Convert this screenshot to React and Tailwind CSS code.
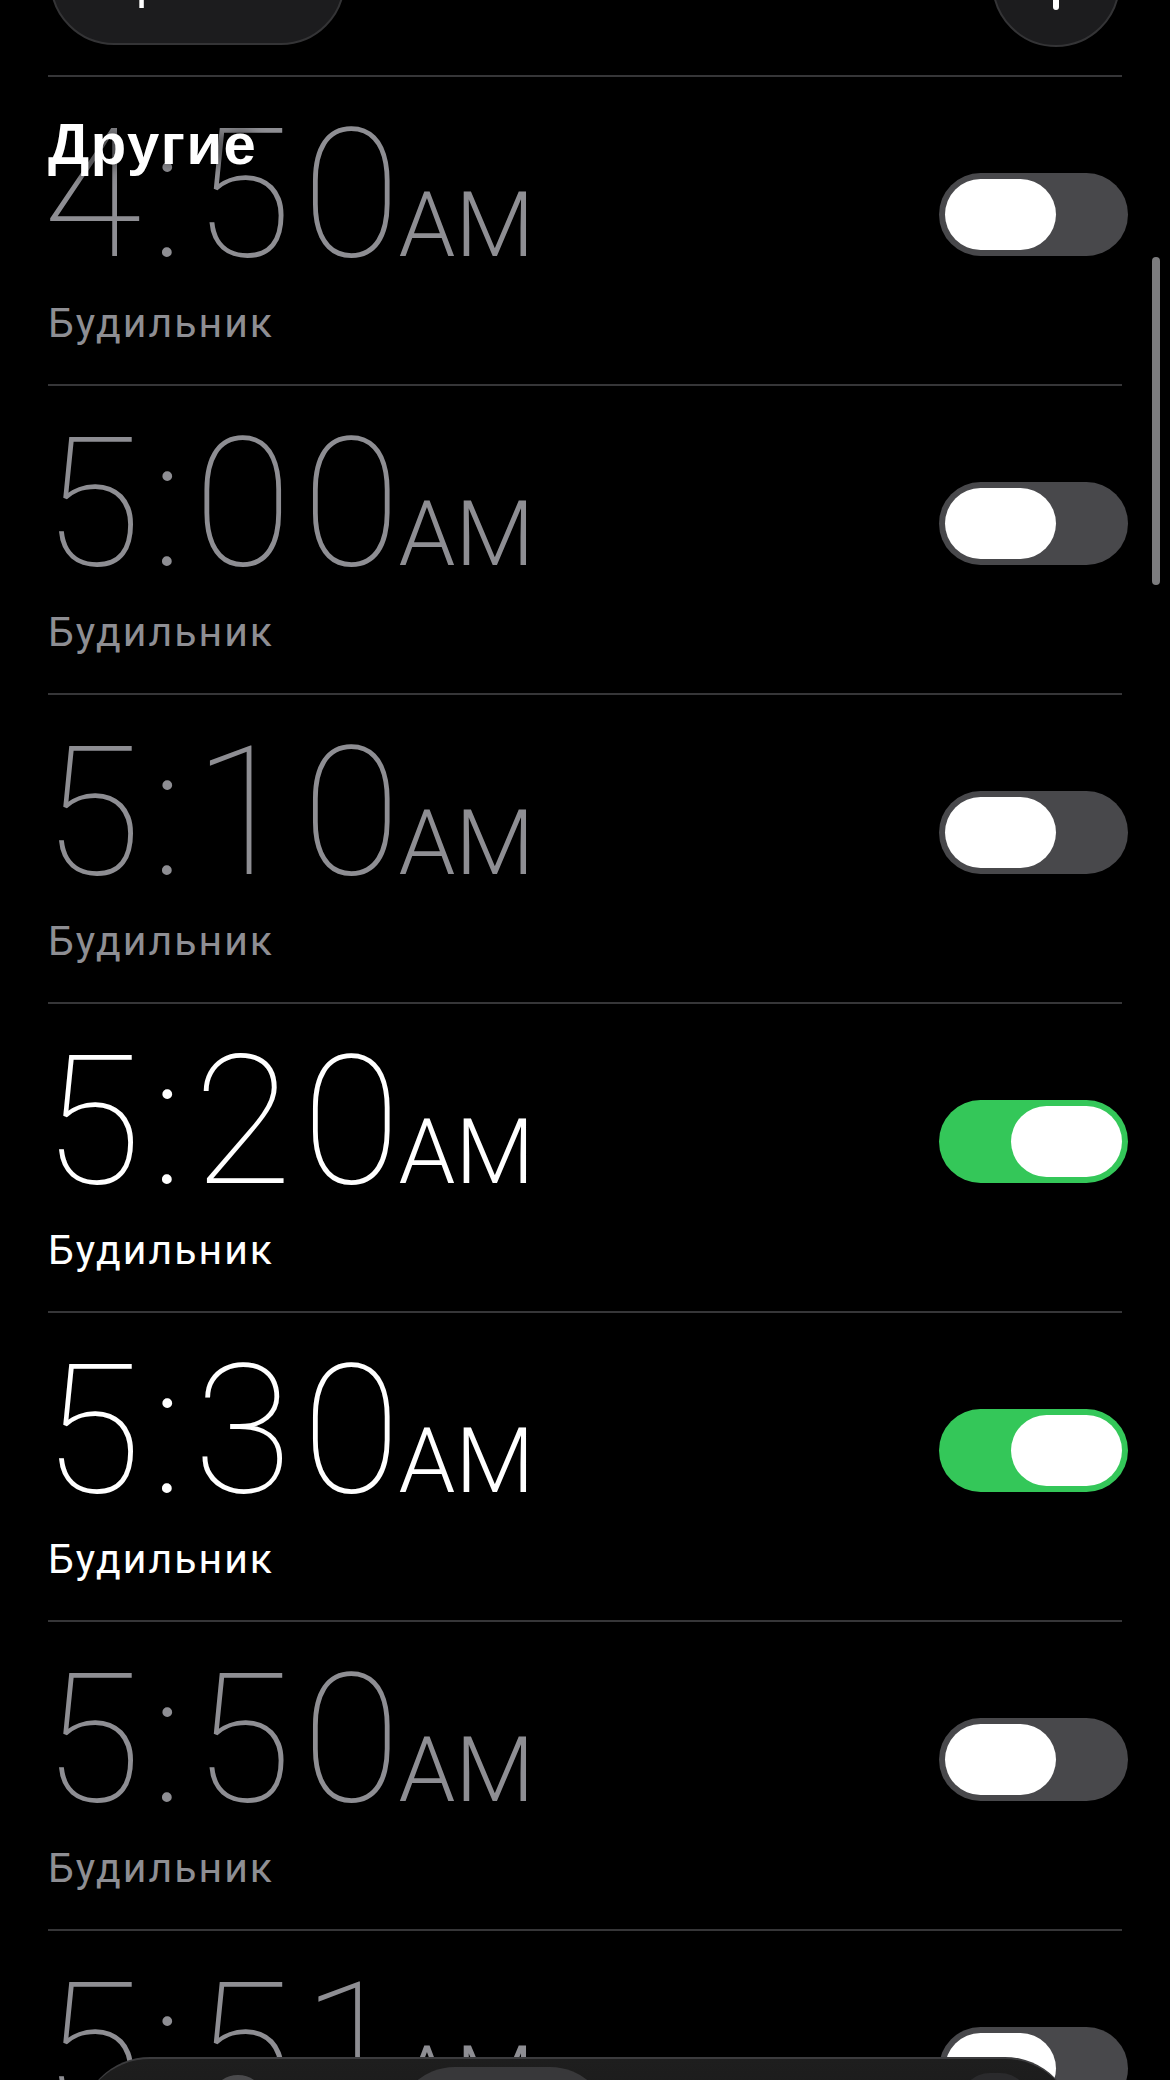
import React from "react";

const alarms = [
  { time: "4:50", on: false },
  { time: "5:00", on: false },
  { time: "5:10", on: false },
  { time: "5:20", on: true },
  { time: "5:30", on: true },
  { time: "5:50", on: false },
  { time: "5:51", on: false },
];

/* ─── TOGGLE ─── */
const Toggle = ({ on }) => (
  <div
    className={`mt-[96px] -mr-[6px] flex h-[83px] w-[189px] shrink-0 rounded-full p-[6px] ${
      on ? "justify-end bg-[#34c759]" : "justify-start bg-[#48484b]"
    }`}
  >
    <div className="h-[71px] w-[111px] rounded-full bg-white" />
  </div>
);

/* ─── ROW ─── */
const AlarmRow = ({ time, on }) => {
  const tone = on ? "text-white" : "text-[#8e8e93]";

  return (
    <div className="flex h-[309px] items-start justify-between border-t-2 border-[#363638]">
      <div className={`pt-[28px] font-['Roboto',sans-serif] ${tone}`}>
        <div className="-ml-[5px] whitespace-nowrap text-[180px] leading-[180px] font-thin tracking-[10px]">
          {time}
          <span className="-ml-[12px] text-[91px] leading-none font-light tracking-normal">AM</span>
        </div>
        <div className="mt-[14px] text-[41px] leading-[48px] tracking-[2px]">Будильник</div>
      </div>
      <Toggle on={on} />
    </div>
  );
};

export default function App() {
  return (
    <div className="relative h-[2080px] w-[1170px] overflow-hidden bg-black">
      {/* top bar, mostly scrolled off */}
      <div className="flex h-[47px] items-end justify-between pl-[50px] pr-[50px]">
        <div className="mb-[2px] flex h-[128px] w-[295px] items-center justify-center rounded-full border-2 border-[#343436] bg-[#1c1c1e] font-['Liberation_Sans',sans-serif] text-[50px] leading-[50px] font-medium text-white">
          Править
        </div>
        <div className="flex h-[128px] w-[128px] items-center justify-center rounded-full border-2 border-[#343436] bg-[#1c1c1e]">
          <svg width="54" height="54" viewBox="0 0 54 54">
            <path d="M27 3v48M3 27h48" stroke="white" strokeWidth="6" strokeLinecap="round" />
          </svg>
        </div>
      </div>

      {/* list */}
      <div className="mt-[28px] px-[48px]">
        {alarms.map((a) => (
          <AlarmRow key={a.time} time={a.time} on={a.on} />
        ))}
      </div>

      {/* sticky section header */}
      <div className="absolute left-[48px] top-[115px] font-['Liberation_Sans',sans-serif] text-[58px] leading-[58px] font-bold tracking-[1.5px] text-white [text-shadow:0_0_14px_rgba(0,0,0,0.9)]">
        Другие
      </div>

      {/* scroll indicator */}
      <div className="absolute left-[1152px] top-[257px] h-[328px] w-[8px] rounded-full bg-[#7c7c7e]" />

      {/* tab bar */}
      <div className="absolute left-[80px] top-[2057px] flex h-[150px] w-[995px] items-start rounded-[70px] border-t-2 border-[#3c3c3e] bg-gradient-to-b from-[#1e1e1e] to-[#141414] pl-[130px] pt-[8px]">
        <div className="mt-[8px] h-[60px] w-[56px] rounded-full border-[5px] border-[#4a4a4c]" />
        <div className="ml-[129px] h-[120px] w-[215px] rounded-full bg-[#38383a]" />
        <div className="ml-[350px] mt-[6px] h-[60px] w-[70px] rounded-full bg-[#2a2a2c]" />
      </div>
    </div>
  );
}
